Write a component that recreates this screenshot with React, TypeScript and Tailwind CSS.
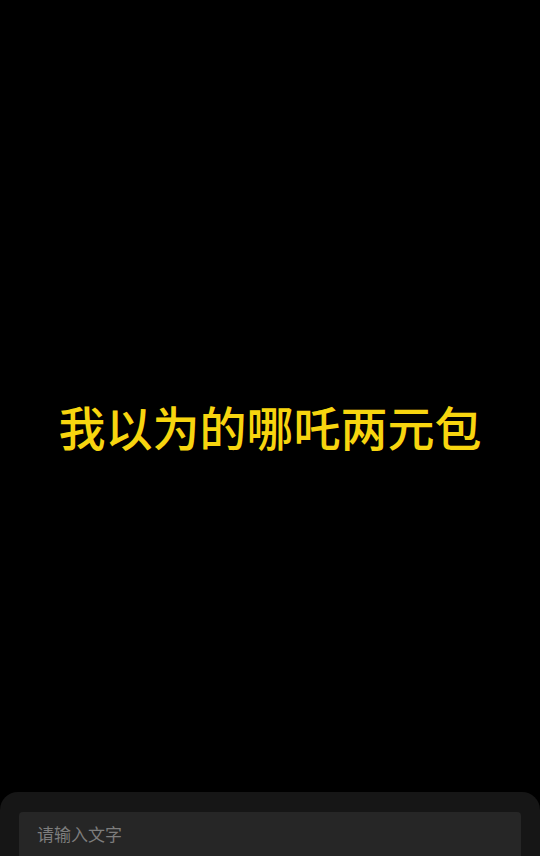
import React from "react";

export default function App() {
  return (
    <div className="relative w-[540px] h-[856px] bg-black overflow-hidden" style={{ fontFamily: '"Noto Sans CJK SC", "Noto Sans", sans-serif' }}>
      <div className="flex h-full items-center justify-center">
        <div className="text-[47px] font-medium leading-none text-[#f7d50f] mb-[6px]">我以为的哪吒两元包</div>
      </div>
      <div className="absolute left-0 right-0 top-[792px] h-[80px] rounded-t-[18px] bg-[#161616] px-[19px] pt-[20px]">
        <div className="h-[60px] rounded-[4px] bg-[#262626] px-[18px] pt-[9px] text-[17px] text-[#7d7d7d]">请输入文字</div>
      </div>
    </div>
  );
}
